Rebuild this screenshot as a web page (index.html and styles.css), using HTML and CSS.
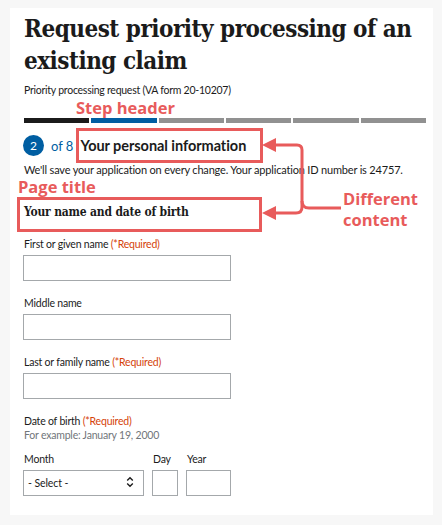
FILE: index.html
```html
<!DOCTYPE html>
<html lang="en">
<head>
<meta charset="utf-8">
<title>Request priority processing</title>
<link rel="stylesheet" href="styles.css">
</head>
<body>
<main class="card">
  <h1 class="title">Request priority processing of an existing claim</h1>
  <p class="subtitle">Priority processing request (VA form 20-10207)</p>

  <div class="progress">
    <span class="seg done"></span>
    <span class="seg current"></span>
    <span class="seg"></span>
    <span class="seg"></span>
    <span class="seg"></span>
    <span class="seg"></span>
  </div>

  <div class="step">
    <span class="step-num">2</span>
    <span class="step-of">of 8</span>
    <span class="step-title hl">Your personal information</span>
  </div>

  <p class="save">We'll save your application on every change. Your application ID number is 24757.</p>

  <h2 class="page-title hl">Your name and date of birth</h2>

  <form class="form">
    <div class="field first">
      <label class="label">First or given name <span class="req">(*Required)</span></label>
      <input class="input wide" type="text">
    </div>
    <div class="field">
      <label class="label">Middle name</label>
      <input class="input wide" type="text">
    </div>
    <div class="field">
      <label class="label">Last or family name <span class="req">(*Required)</span></label>
      <input class="input wide" type="text">
    </div>
    <div class="field">
      <div class="label">Date of birth <span class="req">(*Required)</span></div>
      <div class="hint">For example: January 19, 2000</div>
      <div class="date-row">
        <div class="date-part month">
          <label class="label">Month</label>
          <div class="select">
            <span class="select-text">- Select -</span>
            <svg class="select-icon" width="8" height="12" viewBox="0 0 8 12"><path d="M1.2 4.6 L4 1.8 L6.8 4.6 M1.2 7.4 L4 10.2 L6.8 7.4" fill="none" stroke="#1b1b1b" stroke-width="1.4"/></svg>
          </div>
        </div>
        <div class="date-part day">
          <label class="label">Day</label>
          <input class="input" type="text">
        </div>
        <div class="date-part year">
          <label class="label">Year</label>
          <input class="input" type="text">
        </div>
      </div>
    </div>
  </form>

  <span class="note note-step">Step header</span>
  <span class="note note-page">Page title</span>
  <span class="note note-diff">Different<br>content</span>
  <svg class="connector" width="442" height="525" viewBox="0 0 442 525">
    <path d="M274 145 H297 Q302 145 302 150 V207 Q302 213 296 213 H274" fill="none" stroke="#e85b5b" stroke-width="3"/>
    <path d="M302 201 Q302 208 309 208 H341" fill="none" stroke="#e85b5b" stroke-width="3"/>
    <polygon points="262,145 276,138 276,152" fill="#e85b5b"/>
    <polygon points="262,213 276,206 276,220" fill="#e85b5b"/>
  </svg>
</main>
</body>
</html>
```
FILE: styles.css
```css
html, body {
  margin: 0;
  padding: 0;
}
body {
  background: #f7f7f7;
  font-family: Lato, "Noto Sans", sans-serif;
  color: #1b1b1b;
}
.card {
  position: relative;
  box-sizing: border-box;
  margin: 8px 0 0 10px;
  width: 423px;
  height: 507px;
  background: #fff;
  padding: 5px 0 0 14px;
}
.title {
  margin: 0;
  width: 400px;
  font-family: "DejaVu Serif Condensed", "DejaVu Serif", serif;
  font-weight: 700;
  font-size: 24px;
  line-height: 32px;
  letter-spacing: -0.5px;
}
.subtitle {
  margin: 6px 0 0;
  font-size: 10.5px;
  line-height: 14px;
  letter-spacing: -0.25px;
}
.progress {
  display: flex;
  gap: 2px;
  width: 402px;
  height: 5px;
  margin-top: 21px;
}
.seg {
  flex: 1;
  background: #919191;
}
.seg.done { background: #1b1b1b; }
.seg.current { background: #005ea2; }

.hl {
  border: 3px solid #e85b5b;
  box-sizing: border-box;
}
.step {
  display: flex;
  align-items: center;
  margin-top: 5px;
  height: 35px;
}
.step-num {
  width: 21px;
  height: 21px;
  margin-left: -1px;
  border-radius: 50%;
  background: #005ea2;
  color: #fff;
  font-size: 12px;
  line-height: 21px;
  text-align: center;
}
.step-of {
  margin-left: 7px;
  color: #005ea2;
  font-size: 13px;
}
.step-title {
  margin-left: 3px;
  width: 187px;
  height: 35px;
  padding-left: 1px;
  font-size: 14.5px;
  font-weight: 700;
  line-height: 29px;
  letter-spacing: -0.05px;
}
.save {
  margin: 0;
  font-size: 11px;
  line-height: 14px;
  letter-spacing: -0.18px;
}
.page-title {
  margin: 19.5px 0 0 -7px;
  width: 245px;
  height: 35px;
  padding: 0 0 4px 4px;
  font-family: "DejaVu Serif Condensed", "DejaVu Serif", serif;
  font-weight: 700;
  font-size: 12px;
  line-height: 25px;
  letter-spacing: -0.2px;
}
.form {
  display: flex;
  flex-direction: column;
}
.field {
  display: flex;
  flex-direction: column;
  margin-top: 15.5px;
}
.field.first {
  margin-top: 5.5px;
}
.label {
  font-size: 10.5px;
  line-height: 14px;
  letter-spacing: -0.2px;
}
.req {
  color: #d54309;
}
.hint {
  color: #71767a;
  font-size: 10.5px;
  line-height: 14px;
  letter-spacing: -0.2px;
}
.input {
  box-sizing: border-box;
  height: 26px;
  margin: 3.5px 0 0 -1px;
  border: 1.5px solid #a4a8ab;
  border-radius: 0;
  background: #fff;
  padding: 0 6px;
  font: inherit;
}
.input.wide {
  width: 208px;
}
.date-row {
  display: flex;
  gap: 9px;
  margin-top: 10px;
}
.date-part {
  display: flex;
  flex-direction: column;
}
.date-part.day .input { width: 26px; }
.date-part.year .input { width: 45px; }
.select {
  position: relative;
  box-sizing: border-box;
  width: 121px;
  height: 26px;
  margin: 3.5px 0 0 -1px;
  border: 1.5px solid #a4a8ab;
  display: flex;
  align-items: center;
  padding-left: 4px;
}
.select-text {
  font-size: 10.5px;
  letter-spacing: -0.1px;
}
.select-icon {
  position: absolute;
  right: 9px;
  top: 5.5px;
}
.note {
  position: absolute;
  color: #e85b5b;
  font-family: "Open Sans", sans-serif;
  font-weight: 700;
  font-size: 16.5px;
  line-height: 21px;
}
.note-step { left: 66px; top: 89px; }
.note-page { left: 8px; top: 168px; }
.note-diff { left: 333px; top: 180px; }
.connector {
  position: absolute;
  left: -10px;
  top: -8px;
  pointer-events: none;
}
```
